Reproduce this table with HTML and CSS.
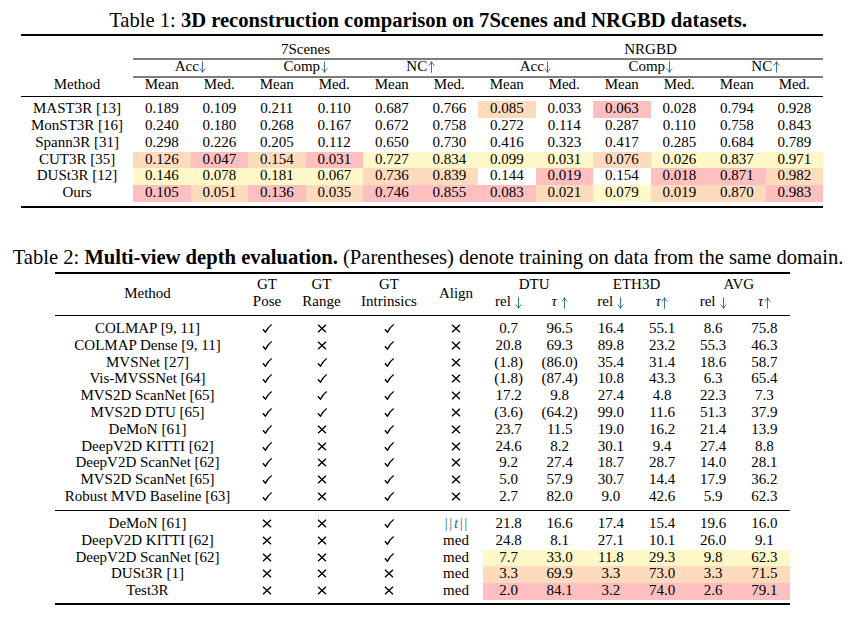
FILE: index.html
```html
<!DOCTYPE html>
<html>
<head>
<meta charset="utf-8">
<link rel="stylesheet" href="styles.css">
</head>
<body>
<svg class="defs" width="0" height="0" aria-hidden="true">
  <symbol id="ck" viewBox="0 0 10 9"><path d="M0.9 5.3 L3.5 8.3 C4.9 5.2 6.9 2.6 9.7 0.5" fill="none" stroke="#000" stroke-width="1.3" stroke-linejoin="round"/></symbol>
  <symbol id="xx" viewBox="0 0 10 9"><path d="M1 0.8 L9 8.2 M9 0.8 L1 8.2" fill="none" stroke="#000" stroke-width="1.35"/></symbol>
  <symbol id="dn" viewBox="0 0 7 12"><path d="M3.5 0.3 V11.2 M0.6 7.6 Q2.6 9 3.5 11.4 Q4.4 9 6.4 7.6" fill="none" stroke="#2f6aa6" stroke-width="0.95"/></symbol>
  <symbol id="up" viewBox="0 0 7 12"><path d="M3.5 11.7 V0.8 M0.6 4.4 Q2.6 3 3.5 0.6 Q4.4 3 6.4 4.4" fill="none" stroke="#2f6aa6" stroke-width="0.95"/></symbol>
</svg>
<div class="page">
  <div class="caption cap1">Table 1: <b>3D reconstruction comparison on 7Scenes and NRGBD datasets.</b></div>
  <div class="t1">
    <div class="rule heavy"></div>

    <div class="c h h1"></div>
    <div class="c h h1 s6">7Scenes</div>
    <div class="c h h1 s6">NRGBD</div>

    <div></div><div class="cmid s6"></div><div class="cmid s6"></div>

    <div class="c h h2"></div>
    <div class="c h h2 s2">Acc<svg class="arr"><use href="#dn"/></svg></div>
    <div class="c h h2 s2">Comp<svg class="arr"><use href="#dn"/></svg></div>
    <div class="c h h2 s2">NC<svg class="arr"><use href="#up"/></svg></div>
    <div class="c h h2 s2">Acc<svg class="arr"><use href="#dn"/></svg></div>
    <div class="c h h2 s2">Comp<svg class="arr"><use href="#dn"/></svg></div>
    <div class="c h h2 s2">NC<svg class="arr"><use href="#up"/></svg></div>

    <div></div><div class="cmid s12"></div>

    <div class="c h h3">Method</div>
    <div class="c h h3">Mean</div><div class="c h h3">Med.</div>
    <div class="c h h3">Mean</div><div class="c h h3">Med.</div>
    <div class="c h h3">Mean</div><div class="c h h3">Med.</div>
    <div class="c h h3">Mean</div><div class="c h h3">Med.</div>
    <div class="c h h3">Mean</div><div class="c h h3">Med.</div>
    <div class="c h h3">Mean</div><div class="c h h3">Med.</div>

    <div class="rule mid m1"></div>

    <div class="c d">MAST3R [13]</div>
    <div class="c d">0.189</div><div class="c d">0.109</div><div class="c d">0.211</div><div class="c d">0.110</div><div class="c d">0.687</div><div class="c d">0.766</div>
    <div class="c d o">0.085</div><div class="c d">0.033</div><div class="c d r">0.063</div><div class="c d">0.028</div><div class="c d">0.794</div><div class="c d">0.928</div>

    <div class="c d">MonST3R [16]</div>
    <div class="c d">0.240</div><div class="c d">0.180</div><div class="c d">0.268</div><div class="c d">0.167</div><div class="c d">0.672</div><div class="c d">0.758</div>
    <div class="c d">0.272</div><div class="c d">0.114</div><div class="c d">0.287</div><div class="c d">0.110</div><div class="c d">0.758</div><div class="c d">0.843</div>

    <div class="c d">Spann3R [31]</div>
    <div class="c d">0.298</div><div class="c d">0.226</div><div class="c d">0.205</div><div class="c d">0.112</div><div class="c d">0.650</div><div class="c d">0.730</div>
    <div class="c d">0.416</div><div class="c d">0.323</div><div class="c d">0.417</div><div class="c d">0.285</div><div class="c d">0.684</div><div class="c d">0.789</div>

    <div class="c d">CUT3R [35]</div>
    <div class="c d o">0.126</div><div class="c d r">0.047</div><div class="c d o">0.154</div><div class="c d r">0.031</div><div class="c d y">0.727</div><div class="c d y">0.834</div>
    <div class="c d y">0.099</div><div class="c d y">0.031</div><div class="c d o">0.076</div><div class="c d y">0.026</div><div class="c d y">0.837</div><div class="c d y">0.971</div>

    <div class="c d">DUSt3R [12]</div>
    <div class="c d y">0.146</div><div class="c d y">0.078</div><div class="c d y">0.181</div><div class="c d y">0.067</div><div class="c d o">0.736</div><div class="c d o">0.839</div>
    <div class="c d">0.144</div><div class="c d r">0.019</div><div class="c d">0.154</div><div class="c d r">0.018</div><div class="c d r">0.871</div><div class="c d o">0.982</div>

    <div class="c d">Ours</div>
    <div class="c d r">0.105</div><div class="c d o">0.051</div><div class="c d r">0.136</div><div class="c d o">0.035</div><div class="c d r">0.746</div><div class="c d r">0.855</div>
    <div class="c d r">0.083</div><div class="c d o">0.021</div><div class="c d y">0.079</div><div class="c d o">0.019</div><div class="c d o">0.870</div><div class="c d r">0.983</div>

    <div class="rule heavy b1"></div>
  </div>

  <div class="caption cap2">Table 2: <b>Multi-view depth evaluation.</b> (Parentheses) denote training on data from the same domain.</div>
  <div class="t2">
    <div class="rule heavy"></div>

    <div class="c hh th2">Method</div>
    <div class="c hh th2 col">GT<br>Pose</div>
    <div class="c hh th2 col">GT<br>Range</div>
    <div class="c hh th2 col">GT<br>Intrinsics</div>
    <div class="c hh th2">Align</div>
    <div class="c hh r1 s2">DTU</div>
    <div class="c hh r1 s2">ETH3D</div>
    <div class="c hh r1 s2">AVG</div>
    <div class="c hh r2">rel <svg class="arr"><use href="#dn"/></svg></div>
    <div class="c hh r2"><i>τ</i> <svg class="arr"><use href="#up"/></svg></div>
    <div class="c hh r2">rel <svg class="arr"><use href="#dn"/></svg></div>
    <div class="c hh r2"><i>τ</i><svg class="arr"><use href="#up"/></svg></div>
    <div class="c hh r2">rel <svg class="arr"><use href="#dn"/></svg></div>
    <div class="c hh r2"><i>τ</i><svg class="arr"><use href="#up"/></svg></div>

    <div class="rule mid m2a"></div>

    <div class="c d">COLMAP [9, 11]</div>
    <div class="c d"><svg class="ic"><use href="#ck"/></svg></div><div class="c d"><svg class="ic"><use href="#xx"/></svg></div><div class="c d"><svg class="ic"><use href="#ck"/></svg></div><div class="c d"><svg class="ic"><use href="#xx"/></svg></div>
    <div class="c d">0.7</div><div class="c d">96.5</div><div class="c d">16.4</div><div class="c d">55.1</div><div class="c d">8.6</div><div class="c d">75.8</div>

    <div class="c d">COLMAP Dense [9, 11]</div>
    <div class="c d"><svg class="ic"><use href="#ck"/></svg></div><div class="c d"><svg class="ic"><use href="#xx"/></svg></div><div class="c d"><svg class="ic"><use href="#ck"/></svg></div><div class="c d"><svg class="ic"><use href="#xx"/></svg></div>
    <div class="c d">20.8</div><div class="c d">69.3</div><div class="c d">89.8</div><div class="c d">23.2</div><div class="c d">55.3</div><div class="c d">46.3</div>

    <div class="c d">MVSNet [27]</div>
    <div class="c d"><svg class="ic"><use href="#ck"/></svg></div><div class="c d"><svg class="ic"><use href="#ck"/></svg></div><div class="c d"><svg class="ic"><use href="#ck"/></svg></div><div class="c d"><svg class="ic"><use href="#xx"/></svg></div>
    <div class="c d">(1.8)</div><div class="c d">(86.0)</div><div class="c d">35.4</div><div class="c d">31.4</div><div class="c d">18.6</div><div class="c d">58.7</div>

    <div class="c d">Vis-MVSSNet [64]</div>
    <div class="c d"><svg class="ic"><use href="#ck"/></svg></div><div class="c d"><svg class="ic"><use href="#ck"/></svg></div><div class="c d"><svg class="ic"><use href="#ck"/></svg></div><div class="c d"><svg class="ic"><use href="#xx"/></svg></div>
    <div class="c d">(1.8)</div><div class="c d">(87.4)</div><div class="c d">10.8</div><div class="c d">43.3</div><div class="c d">6.3</div><div class="c d">65.4</div>

    <div class="c d">MVS2D ScanNet [65]</div>
    <div class="c d"><svg class="ic"><use href="#ck"/></svg></div><div class="c d"><svg class="ic"><use href="#ck"/></svg></div><div class="c d"><svg class="ic"><use href="#ck"/></svg></div><div class="c d"><svg class="ic"><use href="#xx"/></svg></div>
    <div class="c d">17.2</div><div class="c d">9.8</div><div class="c d">27.4</div><div class="c d">4.8</div><div class="c d">22.3</div><div class="c d">7.3</div>

    <div class="c d">MVS2D DTU [65]</div>
    <div class="c d"><svg class="ic"><use href="#ck"/></svg></div><div class="c d"><svg class="ic"><use href="#ck"/></svg></div><div class="c d"><svg class="ic"><use href="#ck"/></svg></div><div class="c d"><svg class="ic"><use href="#xx"/></svg></div>
    <div class="c d">(3.6)</div><div class="c d">(64.2)</div><div class="c d">99.0</div><div class="c d">11.6</div><div class="c d">51.3</div><div class="c d">37.9</div>

    <div class="c d">DeMoN [61]</div>
    <div class="c d"><svg class="ic"><use href="#ck"/></svg></div><div class="c d"><svg class="ic"><use href="#xx"/></svg></div><div class="c d"><svg class="ic"><use href="#ck"/></svg></div><div class="c d"><svg class="ic"><use href="#xx"/></svg></div>
    <div class="c d">23.7</div><div class="c d">11.5</div><div class="c d">19.0</div><div class="c d">16.2</div><div class="c d">21.4</div><div class="c d">13.9</div>

    <div class="c d">DeepV2D KITTI [62]</div>
    <div class="c d"><svg class="ic"><use href="#ck"/></svg></div><div class="c d"><svg class="ic"><use href="#xx"/></svg></div><div class="c d"><svg class="ic"><use href="#ck"/></svg></div><div class="c d"><svg class="ic"><use href="#xx"/></svg></div>
    <div class="c d">24.6</div><div class="c d">8.2</div><div class="c d">30.1</div><div class="c d">9.4</div><div class="c d">27.4</div><div class="c d">8.8</div>

    <div class="c d">DeepV2D ScanNet [62]</div>
    <div class="c d"><svg class="ic"><use href="#ck"/></svg></div><div class="c d"><svg class="ic"><use href="#xx"/></svg></div><div class="c d"><svg class="ic"><use href="#ck"/></svg></div><div class="c d"><svg class="ic"><use href="#xx"/></svg></div>
    <div class="c d">9.2</div><div class="c d">27.4</div><div class="c d">18.7</div><div class="c d">28.7</div><div class="c d">14.0</div><div class="c d">28.1</div>

    <div class="c d">MVS2D ScanNet [65]</div>
    <div class="c d"><svg class="ic"><use href="#ck"/></svg></div><div class="c d"><svg class="ic"><use href="#xx"/></svg></div><div class="c d"><svg class="ic"><use href="#ck"/></svg></div><div class="c d"><svg class="ic"><use href="#xx"/></svg></div>
    <div class="c d">5.0</div><div class="c d">57.9</div><div class="c d">30.7</div><div class="c d">14.4</div><div class="c d">17.9</div><div class="c d">36.2</div>

    <div class="c d">Robust MVD Baseline [63]</div>
    <div class="c d"><svg class="ic"><use href="#ck"/></svg></div><div class="c d"><svg class="ic"><use href="#xx"/></svg></div><div class="c d"><svg class="ic"><use href="#ck"/></svg></div><div class="c d"><svg class="ic"><use href="#xx"/></svg></div>
    <div class="c d">2.7</div><div class="c d">82.0</div><div class="c d">9.0</div><div class="c d">42.6</div><div class="c d">5.9</div><div class="c d">62.3</div>

    <div class="rule mid m2b"></div>

    <div class="c d">DeMoN [61]</div>
    <div class="c d"><svg class="ic"><use href="#xx"/></svg></div><div class="c d"><svg class="ic"><use href="#xx"/></svg></div><div class="c d"><svg class="ic"><use href="#ck"/></svg></div><div class="c d"><span class="norm">||<i>t</i>||</span></div>
    <div class="c d">21.8</div><div class="c d">16.6</div><div class="c d">17.4</div><div class="c d">15.4</div><div class="c d">19.6</div><div class="c d">16.0</div>

    <div class="c d">DeepV2D KITTI [62]</div>
    <div class="c d"><svg class="ic"><use href="#xx"/></svg></div><div class="c d"><svg class="ic"><use href="#xx"/></svg></div><div class="c d"><svg class="ic"><use href="#ck"/></svg></div><div class="c d">med</div>
    <div class="c d">24.8</div><div class="c d">8.1</div><div class="c d">27.1</div><div class="c d">10.1</div><div class="c d">26.0</div><div class="c d">9.1</div>

    <div class="c d">DeepV2D ScanNet [62]</div>
    <div class="c d"><svg class="ic"><use href="#xx"/></svg></div><div class="c d"><svg class="ic"><use href="#xx"/></svg></div><div class="c d"><svg class="ic"><use href="#ck"/></svg></div><div class="c d">med</div>
    <div class="c d y">7.7</div><div class="c d y">33.0</div><div class="c d y">11.8</div><div class="c d y">29.3</div><div class="c d y">9.8</div><div class="c d y">62.3</div>

    <div class="c d">DUSt3R [1]</div>
    <div class="c d"><svg class="ic"><use href="#xx"/></svg></div><div class="c d"><svg class="ic"><use href="#xx"/></svg></div><div class="c d"><svg class="ic"><use href="#xx"/></svg></div><div class="c d">med</div>
    <div class="c d o">3.3</div><div class="c d o">69.9</div><div class="c d o">3.3</div><div class="c d o">73.0</div><div class="c d o">3.3</div><div class="c d o">71.5</div>

    <div class="c d">Test3R</div>
    <div class="c d"><svg class="ic"><use href="#xx"/></svg></div><div class="c d"><svg class="ic"><use href="#xx"/></svg></div><div class="c d"><svg class="ic"><use href="#xx"/></svg></div><div class="c d">med</div>
    <div class="c d r">2.0</div><div class="c d r">84.1</div><div class="c d r">3.2</div><div class="c d r">74.0</div><div class="c d r">2.6</div><div class="c d r">79.1</div>

    <div class="rule heavy b2"></div>
  </div>
</div>
</body>
</html>
```

FILE: styles.css
```css
* { box-sizing: border-box; }

body {
  margin: 0;
  background: #fff;
  color: #000;
  font-family: "Liberation Serif", "Times New Roman", serif;
  font-size: 15px;
}

.defs { position: absolute; width: 0; height: 0; overflow: hidden; }

.page { width: 856px; }

.caption {
  font-size: 20.6px;
  line-height: 22px;
  text-align: center;
  white-space: nowrap;
}
.caption b { font-weight: bold; }
.cap1 { padding-top: 9px; }
.cap2 { margin-top: 38px; }

/* ---------- shared ---------- */
.rule { grid-column: 1 / -1; background: #000; }
.rule.heavy { height: 2px; }
.rule.mid { height: 1.5px; }
.cmid { height: 2px; background: #7d7d7d; }

.s2 { grid-column: span 2; }
.s6 { grid-column: span 6; }
.s12 { grid-column: span 12; }

.c { text-align: center; white-space: nowrap; }
.d { line-height: 15.8px; padding-bottom: 1px; }

.arr { width: 7px; height: 12px; display: inline-block; vertical-align: -2.5px; margin-left: 0.5px; }
.norm { color: #2f6aa6; letter-spacing: 1.6px; margin-left: 1.6px; }

.y { background: #fff8c9; }
.o { background: #fedbbc; }
.r { background: #fdbfbf; }

.ic { width: 10px; height: 9px; display: inline-block; vertical-align: baseline; }

/* ---------- table 1 ---------- */
.t1 {
  display: grid;
  grid-template-columns: 112px repeat(12, 57.5px);
  width: 802px;
  margin: 3.2px 0 0 21px;
}
.t1 .h { line-height: 12.5px; }
.t1 .h1 { padding: 7px 0 2.1px; }
.t1 .h2 { padding-bottom: 2.4px; }
.t1 .h3 { padding-bottom: 5.5px; }
.t1 .m1 { margin-bottom: 4px; }
.t1 .b1 { margin-top: 4px; }

/* ---------- table 2 ---------- */
.t2 {
  display: grid;
  grid-template-columns: 185px 54px 55px 80px 54px repeat(6, 51.17px);
  width: 735px;
  margin: 3.7px 0 0 55px;
}
.t2 .hh { line-height: 17px; }
.t2 .th2 {
  grid-row: span 2;
  padding: 2.7px 0 4.6px;
  display: flex;
  align-items: center;
  justify-content: center;
}
.t2 .th2.col { flex-direction: column; }
.t2 .r1 { padding-top: 2.7px; }
.t2 .r2 { padding-bottom: 4.6px; }
.t2 .m2a { margin-bottom: 4.6px; }
.t2 .m2b { margin: 3.8px 0 5px; }
.t2 .b2 { margin-top: 2.8px; }
```
